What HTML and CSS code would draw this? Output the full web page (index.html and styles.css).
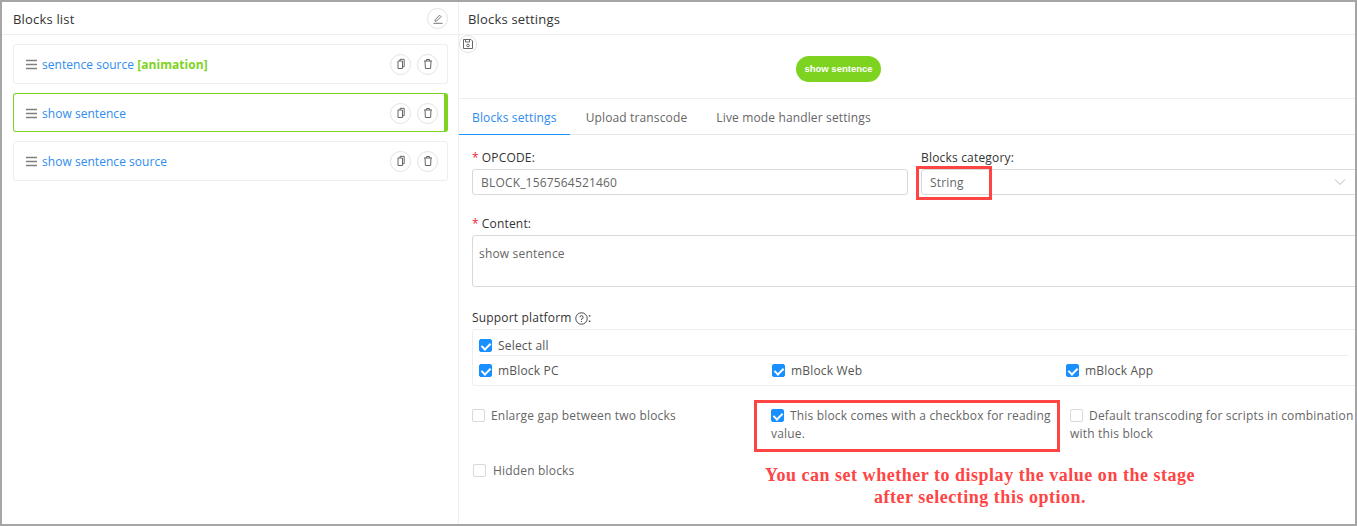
FILE: index.html
```html
<!DOCTYPE html>
<html lang="en">
<head>
  <meta charset="UTF-8" />
  <title>Blocks settings</title>
  <link rel="stylesheet" href="styles.css">
</head>
<body>
  <div class="frame">

    <div class="list-panel">
      <div class="panel-head">
        <span>Blocks list</span>
        <button class="round-btn">
          <svg viewBox="0 0 12 12" width="12" height="12"><path d="M3 8.200 3.300 6.600 7.600 2.200 9 3.600 4.700 8zM1.500 10.300h9" fill="none" stroke="#777" stroke-width="1"/></svg>
        </button>
      </div>
      <div class="block-list">
        <div class="block-row">
          <svg class="drag" viewBox="0 0 11 11" width="11" height="11"><path d="M0 1.500h11M0 5.500h11M0 9.500h11" stroke="#808080" stroke-width="1.300"/></svg>
          <span class="block-name">sentence source <b class="tag">[animation]</b></span>
          <button class="round-btn"><svg viewBox="0 0 12 12" width="12" height="12"><path d="M3 3h4.500v7.500H3zM5 3V1.300h4.200v7.400H7.500" fill="none" stroke="#666" stroke-width="1"/></svg></button>
          <button class="round-btn"><svg viewBox="0 0 12 12" width="12" height="12"><path d="M2 3h8M4.500 3V1.500h3V3M3 3l.4 7.500h5.200L9 3" fill="none" stroke="#666" stroke-width="1"/></svg></button>
        </div>
        <div class="block-row active">
          <svg class="drag" viewBox="0 0 11 11" width="11" height="11"><path d="M0 1.500h11M0 5.500h11M0 9.500h11" stroke="#808080" stroke-width="1.300"/></svg>
          <span class="block-name">show sentence</span>
          <button class="round-btn"><svg viewBox="0 0 12 12" width="12" height="12"><path d="M3 3h4.500v7.500H3zM5 3V1.300h4.200v7.400H7.500" fill="none" stroke="#666" stroke-width="1"/></svg></button>
          <button class="round-btn"><svg viewBox="0 0 12 12" width="12" height="12"><path d="M2 3h8M4.500 3V1.500h3V3M3 3l.4 7.500h5.200L9 3" fill="none" stroke="#666" stroke-width="1"/></svg></button>
        </div>
        <div class="block-row">
          <svg class="drag" viewBox="0 0 11 11" width="11" height="11"><path d="M0 1.500h11M0 5.500h11M0 9.500h11" stroke="#808080" stroke-width="1.300"/></svg>
          <span class="block-name">show sentence source</span>
          <button class="round-btn"><svg viewBox="0 0 12 12" width="12" height="12"><path d="M3 3h4.500v7.500H3zM5 3V1.300h4.200v7.400H7.500" fill="none" stroke="#666" stroke-width="1"/></svg></button>
          <button class="round-btn"><svg viewBox="0 0 12 12" width="12" height="12"><path d="M2 3h8M4.500 3V1.500h3V3M3 3l.4 7.500h5.200L9 3" fill="none" stroke="#666" stroke-width="1"/></svg></button>
        </div>
      </div>
    </div>

    <div class="settings-panel">
      <div class="panel-head">
        <span>Blocks settings</span>
      </div>
      <div class="preview">
        <button class="round-btn save-btn">
          <svg viewBox="0 0 12 12" width="12" height="12"><path d="M1.500 1.500h7.500l1.500 1.500v7.500h-9zM3.500 1.500v2.500h4V1.500" fill="none" stroke="#666" stroke-width="1"/><circle cx="6" cy="7.500" r="1.300" fill="none" stroke="#666"/></svg>
        </button>
        <div class="block-pill">show sentence</div>
      </div>
      <div class="tabs">
        <a class="tab current">Blocks settings</a>
        <a class="tab">Upload transcode</a>
        <a class="tab">Live mode handler settings</a>
      </div>
      <div class="form">
        <div class="form-row">
          <div class="field opcode">
            <label class="field-label"><i>*</i>OPCODE:</label>
            <div class="input">BLOCK_1567564521460</div>
          </div>
          <div class="field category">
            <label class="field-label">Blocks category:</label>
            <div class="input select">
              <span>String</span>
              <svg viewBox="0 0 12 12" width="12" height="12"><path d="M1 3.500 6 8.500 11 3.500" fill="none" stroke="#bbb" stroke-width="1"/></svg>
            </div>
          </div>
        </div>
        <div class="field content">
          <label class="field-label"><i>*</i>Content:</label>
          <div class="textarea">show sentence</div>
        </div>
        <div class="field platform">
          <label class="field-label">Support platform
            <svg viewBox="0 0 12 12" width="13" height="13"><circle cx="6" cy="6" r="5.300" fill="none" stroke="#444" stroke-width=".9"/><path d="M4.500 4.800A1.500 1.500 0 1 1 6 6.400V7.300M6 8.300v1" fill="none" stroke="#444" stroke-width=".9"/></svg>:</label>
          <div class="platform-box">
            <div class="select-all"><span class="check on"></span>Select all</div>
            <div class="platform-list">
              <div><span class="check on"></span>mBlock PC</div>
              <div><span class="check on"></span>mBlock Web</div>
              <div><span class="check on"></span>mBlock App</div>
            </div>
          </div>
        </div>
        <div class="options">
          <div class="option"><span class="check"></span>Enlarge gap between two blocks</div>
          <div class="option"><span class="check on"></span>This block comes with a checkbox for reading value.</div>
          <div class="option"><span class="check"></span>Default transcoding for scripts in combination with this block</div>
        </div>
        <div class="option hidden-opt"><span class="check"></span>Hidden blocks</div>
      </div>

      <div class="mark mark-category"></div>
      <div class="mark mark-option"></div>
      <p class="note">You can set whether to display the value on the stage<br>after selecting this option.</p>
    </div>

  </div>
</body>
</html>
```
FILE: styles.css
```css
* {
  margin: 0;
  padding: 0;
  box-sizing: border-box;
}

html, body {
  height: 100%;
  overflow: hidden;
}

body {
  background-color: #fff;
  color: #555;
  font-family: 'Open Sans', 'Noto Sans', sans-serif;
  font-size: 12px;
  letter-spacing: 0.18px;
}

.frame {
  display: flex;
  height: 526px;
  border: 2px solid #a5a5a5;
  overflow: hidden;
}

.list-panel {
  width: 457px;
  flex-shrink: 0;
  border-right: 1px solid #eee;
}

.settings-panel {
  flex: 1;
  min-width: 0;
  position: relative;
}

.panel-head {
  display: flex;
  justify-content: space-between;
  align-items: center;
  height: 33px;
  padding: 1px 10px 0 11px;
  border-bottom: 1px solid #eee;
  color: #333;
  font-size: 13px;
}
.settings-panel .panel-head {
  padding-left: 9px;
}

.round-btn {
  display: inline-flex;
  justify-content: center;
  align-items: center;
  width: 21px;
  height: 21px;
  flex-shrink: 0;
  background-color: #fff;
  border: 1px solid #e2e2e2;
  border-radius: 50%;
}

.block-list {
  padding: 9px 10px 0 11px;
}
.block-row {
  display: flex;
  align-items: center;
  gap: 6px;
  height: 40px;
  margin-bottom: 9px;
  padding: 0 9px 0 12px;
  border: 1px solid #eee;
  border-radius: 3px;
}
.block-row.active {
  height: 39px;
  padding-top: 1px;
  border: 1px solid #7ed321;
  border-right-width: 4px;
  padding-right: 6px;
}
.drag {
  margin-right: -1px;
  flex-shrink: 0;
}
.block-name {
  flex: 1;
  color: #2d8cf0;
  letter-spacing: 0.04px;
}
.tag {
  color: #7ed321;
}

.preview {
  position: relative;
  height: 64px;
  border-bottom: 1px solid #eee;
  display: flex;
  justify-content: center;
  align-items: center;
}
.save-btn {
  position: absolute;
  top: 0;
  left: 0;
  width: 18px;
  height: 18px;
}
.block-pill {
  margin: 4px 137px 0 0;
  padding: 0 8px;
  height: 26px;
  line-height: 26px;
  border-radius: 13px;
  background-color: #7ed321;
  color: #fff;
  font-family: 'Liberation Sans', Arial, sans-serif;
  font-size: 9.500px;
  font-weight: bold;
  letter-spacing: 0;
}

.tabs {
  display: flex;
  height: 36px;
  border-bottom: 1px solid #e8e8e8;
}
.tab {
  padding: 1px 13px 0;
  line-height: 36px;
  margin-right: 3px;
  color: #666;
  letter-spacing: 0.14px;
}
.tab.current {
  color: #2d8cf0;
  border-bottom: 1px solid #1890ff;
  height: 36px;
}

.form {
  padding: 14px 0 0 13px;
}
.form-row {
  display: flex;
}
.field-label {
  display: block;
  height: 17px;
  margin-bottom: 3px;
  line-height: 17px;
  color: #333;
}
.field-label i {
  color: #f5222d;
  font-style: normal;
  margin-right: 3px;
}
.field-label svg {
  vertical-align: -3px;
}
.input {
  height: 26px;
  line-height: 25px;
  padding: 0 8px;
  border: 1px solid #d9d9d9;
  border-radius: 3px;
  color: #666;
}
.opcode {
  width: 436px;
  margin-right: 13px;
}
.category {
  flex: 1;
  margin-right: -12px;
}
.select {
  display: flex;
  justify-content: space-between;
  align-items: center;
  padding-right: 20px;
}
.textarea {
  height: 52px;
  margin-right: -12px;
  padding: 9px 6px;
  border: 1px solid #d9d9d9;
  border-radius: 3px;
  color: #666;
}
.content {
  margin-top: 20px;
}
.platform {
  margin-top: 22px;
}
.platform-box {
  padding: 0 6px;
  height: 57px;
  border: 1px solid #eee;
  border-radius: 3px;
  margin-right: -11px;
}
.select-all {
  display: flex;
  align-items: center;
  height: 26px;
  padding-top: 6px;
  border-bottom: 1px solid #eee;
  margin-right: 11px;
}
.platform-list {
  display: grid;
  grid-template-columns: 293px 294px 1fr;
  align-items: center;
  height: 29px;
}
.platform-list div {
  display: flex;
  align-items: center;
}

.check {
  display: inline-block;
  position: relative;
  width: 13px;
  height: 13px;
  margin-right: 6px;
  flex-shrink: 0;
  vertical-align: -2px;
  background-color: #fff;
  border: 1px solid #d9d9d9;
  border-radius: 2px;
}
.check.on {
  background-color: #1890ff;
  border-color: #1890ff;
}
.check.on::after {
  content: "";
  position: absolute;
  left: 3px;
  top: 1px;
  width: 4px;
  height: 7px;
  border: solid #fff;
  border-width: 0 2px 2px 0;
  transform: rotate(45deg);
}

.options {
  display: grid;
  grid-template-columns: 299px 299px 1fr;
  margin-top: 21px;
  line-height: 18px;
}
.option {
  color: #666;
}
.hidden-opt {
  margin-top: 19px;
  margin-left: 1px;
}
.hidden-opt .check {
  margin-right: 7px;
}

.mark {
  position: absolute;
  border: 3px solid #f44;
}
.mark-category {
  left: 457px;
  top: 164px;
  width: 76px;
  height: 34px;
}
.mark-option {
  left: 295px;
  top: 398px;
  width: 306px;
  height: 52px;
}
.note {
  position: absolute;
  left: 271px;
  top: 462px;
  width: 500px;
  text-align: center;
  color: #f44;
  font-family: 'Liberation Serif', 'Times New Roman', serif;
  font-size: 18px;
  font-weight: bold;
  line-height: 22px;
  letter-spacing: 0.52px;
}
```
